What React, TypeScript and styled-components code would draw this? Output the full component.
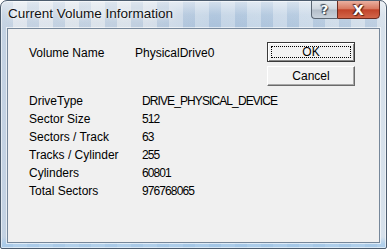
import React from 'react';
import styled, { createGlobalStyle, css } from 'styled-components';

const GlobalStyle = createGlobalStyle`
  html, body {
    margin: 0;
    padding: 0;
    background: #ffffff;
  }
  body {
    font-family: "Liberation Sans", Arial, sans-serif;
  }
`;

const Window = styled.div`
  box-sizing: border-box;
  width: 387px;
  height: 249px;
  display: flex;
  flex-direction: column;
  border: 1px solid #4c5c6e;
  border-radius: 7px 7px 2px 2px;
  overflow: hidden;
  background:
    linear-gradient(180deg, rgba(255, 255, 255, 0.5) 0, rgba(255, 255, 255, 0.1) 14px, rgba(255, 255, 255, 0) 28px, rgba(160, 200, 235, 0) 236px, rgba(160, 200, 235, 0.7) 243px),
    repeating-linear-gradient(90deg, rgba(110, 150, 195, 0.2) 0 12px, rgba(255, 255, 255, 0.14) 12px 26px),
    linear-gradient(90deg, #d9e1ea 0%, #d3dce6 35%, #b8cce1 55%, #c0d2e4 75%, #d0dce8 100%);
  box-shadow: inset 0 0 0 1px rgba(255, 255, 255, 0.55);
`;

const TitleBar = styled.div`
  height: 27px;
  display: flex;
  align-items: flex-start;
  justify-content: space-between;
  flex-shrink: 0;
`;

const Title = styled.div`
  padding: 5px 0 0 7px;
  font-size: 13.5px;
  line-height: 16px;
  color: #111;
  text-shadow: 0 0 6px rgba(255, 255, 255, 0.95), 0 0 2px rgba(255, 255, 255, 0.9);
`;

const CaptionButtons = styled.div`
  display: flex;
  margin: -1px 6px 0 0;
`;

const CaptionButton = styled.div<{ $kind: 'help' | 'close' }>`
  box-sizing: border-box;
  height: 19px;
  display: flex;
  align-items: center;
  justify-content: center;
  font-family: "DejaVu Sans", Verdana, sans-serif;
  font-weight: bold;
  color: #fff;
  ${p =>
    p.$kind === 'help'
      ? css`
          width: 26px;
          font-size: 13px;
          border: 1px solid #5b6673;
          border-right: none;
          border-radius: 0 0 0 4px;
          background: linear-gradient(180deg, #e6ebf0 0%, #cdd5de 48%, #b3bdc8 52%, #c9d2dc 100%);
          text-shadow: 0 0 1px #2c3440, 1px 1px 1px #3a4450, -1px -1px 1px #3a4450;
        `
      : css`
          width: 43px;
          font-size: 14px;
          border: 1px solid #6a2b20;
          border-radius: 0 0 4px 0;
          background: linear-gradient(180deg, #eab0a0 0%, #d87a62 45%, #c2442a 52%, #d2664a 100%);
          text-shadow: 0 0 1px #4a1a10, 1px 1px 1px #5a2418, -1px -1px 1px #5a2418;
        `}
`;

const Frame = styled.div`
  flex: 1;
  display: flex;
  padding: 0 6px 5px 6px;
`;

const Client = styled.div`
  flex: 1;
  box-sizing: border-box;
  border: 1px solid #76879a;
  box-shadow: 0 0 0 1px rgba(255, 255, 255, 0.6);
  background: #f0f0f0;
  padding: 13px 24px 0 21px;
  font-size: 12px;
  color: #000;
`;

const TopRow = styled.div`
  display: flex;
  justify-content: space-between;
  align-items: flex-start;
`;

const NameRow = styled.div`
  display: grid;
  grid-template-columns: 106px auto;
  line-height: 18px;
  margin-top: 2px;
`;

const ButtonColumn = styled.div`
  display: flex;
  flex-direction: column;
  gap: 4px;
`;

const DialogButton = styled.button<{ $default?: boolean }>`
  position: relative;
  box-sizing: border-box;
  width: 88px;
  height: 20px;
  padding: 0;
  font-family: "Liberation Sans", Arial, sans-serif;
  font-size: 12px;
  color: #000;
  background: #f2f2f2;
  border: 1px solid;
  ${p =>
    p.$default
      ? css`
          border-color: #3a3a3a;
          box-shadow: inset 1px 1px 0 #fff, inset -1px -1px 0 #8a8a8a;
          &::after {
            content: '';
            position: absolute;
            inset: 3px;
            border: 1px dotted #000;
          }
        `
      : css`
          border-color: #fff #6a6a6a #6a6a6a #fff;
          box-shadow: inset -1px -1px 0 #a8a8a8;
        `}
`;

const InfoGrid = styled.div`
  display: grid;
  grid-template-columns: 113px auto;
  line-height: 18px;
  margin-top: 6px;
`;

const Value = styled.div<{ $tight?: boolean }>`
  letter-spacing: ${p => (p.$tight ? '-0.9px' : 'normal')};
`;

const rows: [string, string][] = [
  ['DriveType', 'DRIVE_PHYSICAL_DEVICE'],
  ['Sector Size', '512'],
  ['Sectors / Track', '63'],
  ['Tracks / Cylinder', '255'],
  ['Cylinders', '60801'],
  ['Total Sectors', '976768065'],
];

export default function App() {
  return (
    <>
      <GlobalStyle />
      <Window>
        <TitleBar>
          <Title>Current Volume Information</Title>
          <CaptionButtons>
            <CaptionButton $kind="help">?</CaptionButton>
            <CaptionButton $kind="close">X</CaptionButton>
          </CaptionButtons>
        </TitleBar>
        <Frame>
          <Client>
            <TopRow>
              <NameRow>
                <div>Volume Name</div>
                <div>PhysicalDrive0</div>
              </NameRow>
              <ButtonColumn>
                <DialogButton $default>OK</DialogButton>
                <DialogButton>Cancel</DialogButton>
              </ButtonColumn>
            </TopRow>
            <InfoGrid>
              {rows.map(([label, value]) => (
                <React.Fragment key={label}>
                  <div>{label}</div>
                  <Value $tight>{value}</Value>
                </React.Fragment>
              ))}
            </InfoGrid>
          </Client>
        </Frame>
      </Window>
    </>
  );
}
